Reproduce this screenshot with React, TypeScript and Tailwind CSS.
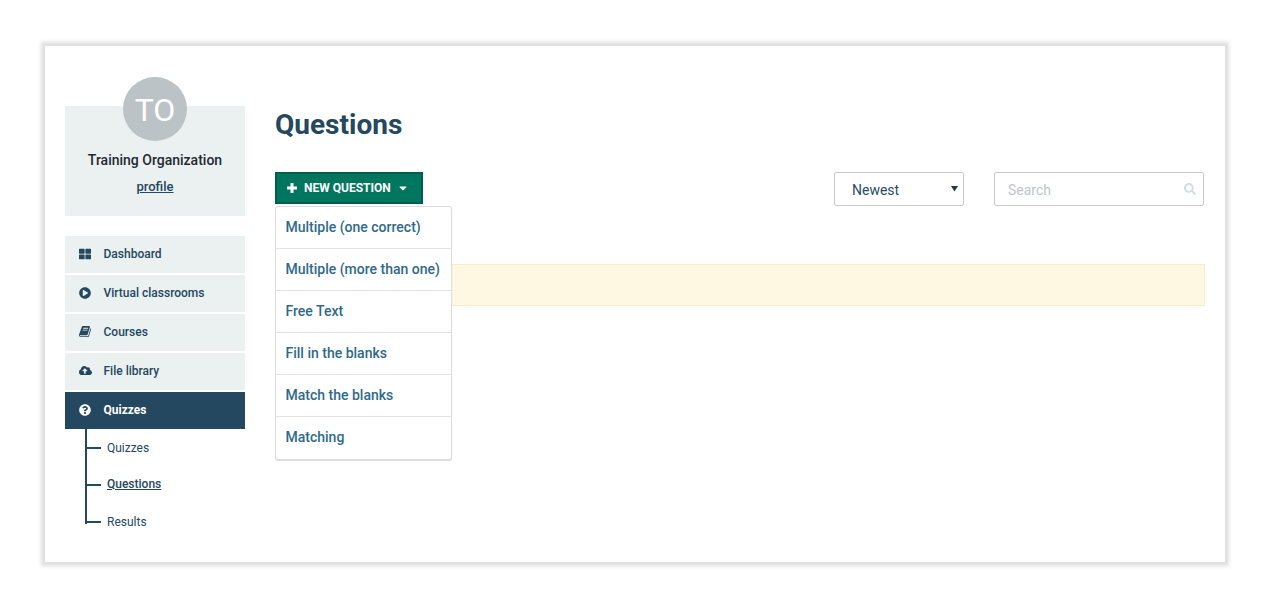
import { FaThLarge, FaPlayCircle, FaCloudUploadAlt, FaQuestionCircle, FaSearch, FaCaretDown } from 'react-icons/fa';

const BookIcon = ({ className }: { className?: string }) => (
  <svg viewBox="0 0 1792 1792" className={className} fill="currentColor">
    <path d="M1639 478q40 57 18 129l-275 906q-19 64-76.500 107.500t-122.500 43.500h-923q-77 0-148.500-53.500t-99.500-130.500q-24-66-2-125 0-4 3-27t4-37q1-8-3-21.500t-3-19.500q2-11 8-21t16.500-23.500 16.500-23.500q23-38 45-91.500t30-91.500q3-10 .5-30t-.5-28q3-11 17-28t17-23q21-36 42-92t25-90q1-9-2.500-32t.5-28q4-13 22-30.500t22-22.500q19-26 42.500-84.500t27.500-96.500q1-8-3-25.500t-2-26.500q2-8 9-18t18-23 17-21q8-12 16.500-30.500t15-35 16-36 19.500-32 26.500-23.500 36-11.500 47.500 5.500l-1 3q38-9 51-9h761q74 0 114 56t18 130l-274 906q-36 119-71.500 153.500t-128.500 34.500h-869q-27 0-38 15-11 16-1 43 24 70 144 70h923q29 0 56-15.500t35-41.500l300-987q7-22 5-57 38 15 59 43zm-1064 2q-4 13 2 22.500t20 9.500h608q13 0 25.500-9.500t16.500-22.500l21-64q4-13-2-22.500t-20-9.500h-608q-13 0-25.500 9.500t-16.500 22.500zm-83 256q-4 13 2 22.500t20 9.500h608q13 0 25.500-9.500t16.500-22.500l21-64q4-13-2-22.500t-20-9.500h-608q-13 0-25.500 9.500t-16.500 22.500z" />
  </svg>
);

const navItems = [
  { label: 'Dashboard', icon: FaThLarge, size: 'w-[12px] h-[12px]' },
  { label: 'Virtual classrooms', icon: FaPlayCircle, size: 'w-[12px] h-[12px]' },
  { label: 'Courses', icon: BookIcon, size: 'w-[13px] h-[13px]' },
  { label: 'File library', icon: FaCloudUploadAlt, size: 'w-[13px] h-[13px]' },
];

const subItems = ['Quizzes', 'Questions', 'Results'];

const questionTypes = [
  'Multiple (one correct)',
  'Multiple (more than one)',
  'Free Text',
  'Fill in the blanks',
  'Match the blanks',
  'Matching',
];

const App = () => {
  return (
    <div className="h-[609px] bg-white pt-[46px] pl-[45px] font-['Roboto',sans-serif] overflow-hidden">
      <div className="flex w-[1180px] h-[516px] bg-white shadow-[0_0_4px_4px_rgba(0,0,0,0.13)] pl-5 pt-[31px]">
        {/* sidebar */}
        <aside className="w-[180px] shrink-0">
          <div className="h-[139px] flex flex-col items-center relative">
            <div className="absolute left-0 right-0 top-[29px] h-[110px] bg-[#ebf0f0]"></div>
            <div className="relative w-16 h-16 pt-[2px] rounded-full bg-[#bcc3c6] text-white text-[32px] flex items-center justify-center">
              TO
            </div>
            <div className="relative mt-[9px] text-[14px] leading-[20px] font-medium text-[#1f2a30]">Training Organization</div>
            <a className="relative mt-[7px] text-[13px] leading-[20px] font-medium text-[#234860] underline">profile</a>
          </div>

          <nav className="mt-5 flex flex-col gap-[2px]">
            {navItems.map((item) => (
              <div key={item.label} className="h-[37px] pb-[2px] bg-[#ebf0f0] flex items-center pl-[14px] text-[12px] font-medium text-[#234860]">
                <span className="w-[24.500px]">
                  <item.icon className={item.size} />
                </span>
                {item.label}
              </div>
            ))}
            <div className="h-[37px] pb-[2px] bg-[#24485f] flex items-center pl-[14px] text-[12px] font-bold text-white">
              <span className="w-[24.500px]">
                <FaQuestionCircle className="w-[12px] h-[12px]" />
              </span>
              Quizzes
            </div>
          </nav>

          <ul className="relative ml-5 h-[95px] text-[12px] text-[#234860]">
            <li className="absolute left-0 top-0 w-[2px] h-[95px] bg-[#24485f]"></li>
            {subItems.map((sub) => (
              <li key={sub} className="flex items-center h-[37px]">
                <span className="w-[16px] h-[2px] bg-[#24485f] mr-[6px]"></span>
                <span className={sub === 'Questions' ? 'font-medium underline mb-[2px]' : ''}>{sub}</span>
              </li>
            ))}
          </ul>
        </aside>

        {/* main */}
        <main className="ml-[30px] w-[930px]">
          <h1 className="mt-[28px] text-[28px] leading-[40px] font-bold text-[#24485f]">Questions</h1>

          <div className="relative mt-[27px] flex items-start">
            <button className="h-[32px] w-[148px] bg-[#00765e] border-2 border-[#005f4c] flex items-center pl-[10px] text-white text-[12px] font-bold">
              <svg width="10" height="10" viewBox="0 0 10 10" className="fill-current mr-[7px]">
                <path d="M3.500 0h3v3.500H10v3H6.500V10h-3V6.500H0v-3h3.500z" />
              </svg>
              NEW QUESTION
              <FaCaretDown className="w-[12px] h-[12px] ml-[6px]" />
            </button>

            <div className="absolute left-0 top-[34px] w-[177px] bg-white border border-[#dedede] rounded-[3px] shadow-[0_1px_1px_rgba(0,0,0,0.15)] z-10">
              {questionTypes.map((type, index) => (
                <div key={type} className={`h-[42px] flex items-center pl-[9.500px] pr-[10px] text-[14px] font-medium text-[#2f6a8a] ${index < questionTypes.length - 1 ? 'border-b border-[#e3e3e3]' : 'pb-[1px]'}`}>
                  {type}
                </div>
              ))}
            </div>

            <div className="ml-auto flex gap-[30px] mr-[1px]">
              <div className="relative w-[130px] h-[34px] pt-[2px] border border-[#c9c9c9] rounded-[2px] flex items-center pl-[17px] text-[14px] text-[#2a4d66]">
                Newest
                <svg width="7" height="7" viewBox="0 0 7 7" className="absolute right-[5px] top-[12px] fill-[#24364a]">
                  <path d="M0 1h7L3.500 6.500z" />
                </svg>
              </div>
              <div className="w-[210px] h-[34px] pt-[2px] border border-[#c9c9c9] rounded-[2px] flex items-center justify-between pl-[13px] pr-[7px] text-[14px] text-[#bfc5ca]">
                Search
                <FaSearch className="w-[12px] h-[12px] mb-[2px] text-[#cfdfe3]" />
              </div>
            </div>
          </div>

          <div className="mt-[58px] h-[42px] bg-[#fef7e2] border border-[#fbeccb]"></div>
        </main>
      </div>
    </div>
  );
};

export default App;
